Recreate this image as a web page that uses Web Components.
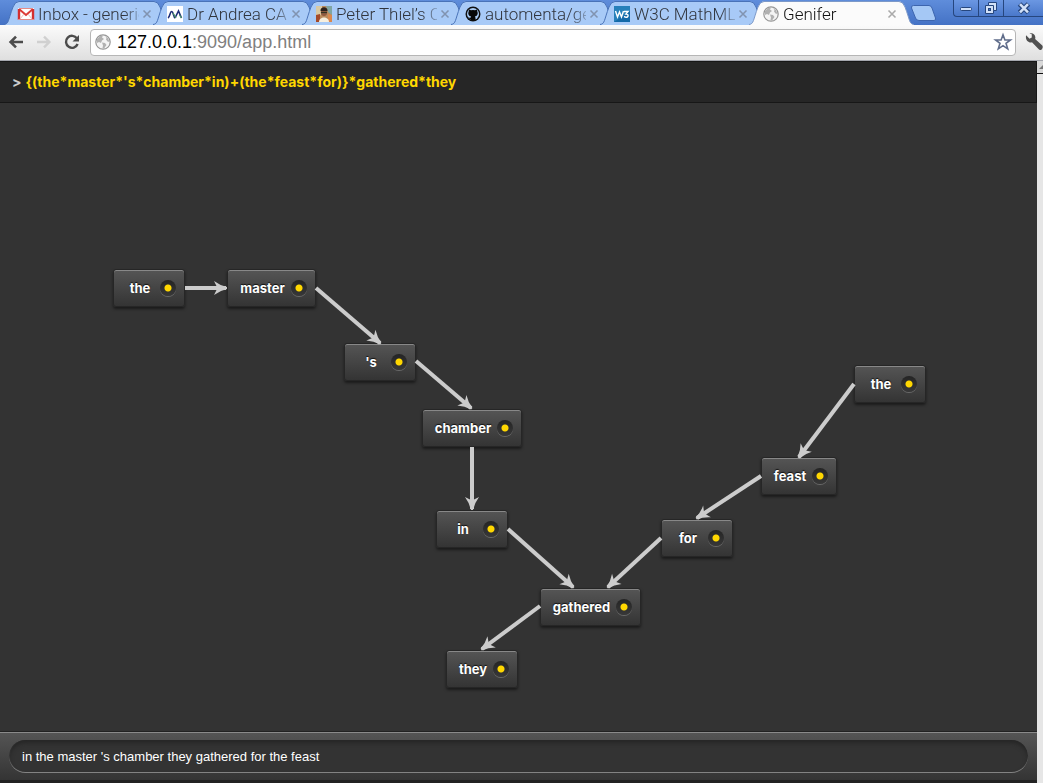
<!DOCTYPE html>
<html lang="en">
<head>
<meta charset="utf-8">
<title>Genifer</title>
<style>
html,body{height:100%;margin:0}
body{display:flex;flex-direction:column;overflow:hidden;background:#333;font-family:"Liberation Sans",Arial,sans-serif}
</style>
</head>
<body>
<browser-tabs>
  <browser-tab><a-icon slot="icon" name="mail"></a-icon>Inbox - generic</browser-tab>
  <browser-tab><a-icon slot="icon" name="wave"></a-icon>Dr Andrea CA</browser-tab>
  <browser-tab><a-icon slot="icon" name="photo"></a-icon>Peter Thiel’s C</browser-tab>
  <browser-tab><a-icon slot="icon" name="github"></a-icon>automenta/ge</browser-tab>
  <browser-tab><a-icon slot="icon" name="w3"></a-icon>W3C MathML</browser-tab>
  <browser-tab selected><a-icon slot="icon" name="globe"></a-icon>Genifer</browser-tab>
</browser-tabs>
<browser-toolbar></browser-toolbar>
<scroll-frame>
  <formula-bar>{(the*master*'s*chamber*in)+(the*feast*for)}*gathered*they</formula-bar>
  <word-graph>
    <word-node x="113" y="166" w="72">the</word-node>
    <word-node x="227" y="166" w="89">master</word-node>
    <word-node x="344" y="240" w="72">'s</word-node>
    <word-node x="422" y="306" w="100">chamber</word-node>
    <word-node x="436" y="407" w="72">in</word-node>
    <word-node x="540" y="485" w="101">gathered</word-node>
    <word-node x="446" y="547" w="72">they</word-node>
    <word-node x="661" y="416" w="72">for</word-node>
    <word-node x="761" y="354" w="76">feast</word-node>
    <word-node x="854" y="262" w="72">the</word-node>
  </word-graph>
  <sentence-bar value="in the master 's chamber they gathered for the feast"></sentence-bar>
</scroll-frame>
<script>
const ICONS = {
  mail:'<rect x="0" y="2" width="16" height="12" rx="1" fill="#fff"/><path d="M1 3L8 9L15 3" fill="none" stroke="#dd3a36" stroke-width="2"/><path d="M1 14V3M15 14V3" stroke="#d32f2f" stroke-width="2.4"/><path d="M2 13L6 8M14 13L10 8" stroke="#eebbb8" fill="none"/><path d="M0 13.5H16M1 2.5H15" stroke="#e58b87"/>',
  wave:'<rect width="16" height="16" fill="#fff"/><path d="M1 12C3 11 3 5.500 4.500 5.500C6.500 5.500 6.500 11 8 12" fill="none" stroke="#1e2e78" stroke-width="1.6"/><path d="M8 12L11.500 5L14.500 12" fill="none" stroke="#1e2e78" stroke-width="1.6"/><path d="M6 7L9 12M12.500 9L14.500 12" stroke="#4c9b64" stroke-width="1.2"/>',
  photo:'<rect width="16" height="16" fill="#b98a5c"/><path d="M0 0H6V7L3 11L0 9Z" fill="#d8c9a4"/><path d="M10 0H16V9L12 6Z" fill="#80a5a2"/><path d="M0 9L4 8V16H0Z" fill="#a44a2a"/><path d="M12 8L16 9V16H12Z" fill="#d9874e"/><ellipse cx="8" cy="6" rx="3.2" ry="4" fill="#8e5a40"/><path d="M4.5 5C4 0 12 0 11.5 5Z" fill="#2c211d"/><path d="M5 6.5H11" stroke="#332" stroke-width="1.2"/><path d="M3 16C3 10 13 10 13 16Z" fill="#f6efdf"/>',
  github:'<circle cx="8" cy="8" r="7.5" fill="#101010"/><circle cx="8" cy="8" r="6" fill="#a9cbf4"/><path d="M4 3.4L6 4.2Q8 3.7 10 4.2L12 3.4L12.3 5.6C13.5 8 12 10.3 9.8 10.6Q10.5 11.2 10.5 12V14.5H5.5V12.9Q3.6 13.2 3 11.2Q4.7 12 5.6 11.8Q5.7 11 6.2 10.6C4 10.3 2.5 8 3.7 5.6Z" fill="#080808"/>',
  w3:'<rect width="16" height="16" fill="#1469a8"/><path d="M0 0H16V5L0 16Z" fill="#2780ba"/><path d="M1.5 5L3.5 11L5.5 6L7.5 11L9.5 5M10 5.5H14L12 8C15 8 14.5 11.5 12 11.3L10 10.5" stroke="#fff" stroke-width="1.4" fill="none"/>',
  globe:'<circle cx="8" cy="8" r="7.2" fill="#f4f4f4" stroke="#969696" stroke-width="1.2"/><path d="M2 5L5 2L8 1.5L7 3.5L9 5L7 6.5L6 9L4 8L2 9ZM10 2L13 4L14.5 8L12.5 7.5L11 5.5L11.5 4ZM7 8.5L10 9L11.5 11L9 14.5L7.5 14L8 11.5Z" fill="#b1b1b1"/>',
  back:'<path d="M2 8H15M8 2.6L2.6 8L8 13.4" fill="none" stroke="#4c4c4c" stroke-width="2.6"/>',
  forward:'<path d="M1 8H14M8 2.6L13.4 8L8 13.4" fill="none" stroke="#d0d0d0" stroke-width="2.4"/>',
  reload:'<path d="M13 4.5A6 6 0 1 0 13.6 10" fill="none" stroke="#4c4c4c" stroke-width="2.4"/><path d="M15 1V7.5H8.5Z" fill="#4c4c4c"/>',
  star:'<path d="M8 .8L9.9 6H15.4L11 9.3L12.7 14.8L8 11.6L3.3 14.8L5 9.3L.6 6H6.1Z" fill="#fff" stroke="#606d8b" stroke-width="1.6"/>',
  wrench:'<path d="M1 2L4 5L6 4V1L4 .5C7-.7 10 2 9 5.3L15.4 11Q16.5 13.2 14.6 14.8Q13 15.5 12 14.3L6.2 8.3C3 9.2 0 6 1 2Z" fill="#505050"/>',
  close:'<path d="M4 4L12 12M12 4L4 12" stroke="currentColor" stroke-width="1.8"/>',
  min:'<rect x="2.5" y="7.5" width="11" height="3" rx="1" fill="#d2e1f8" stroke="#26467e"/>',
  restore:'<path d="M5.5 2.5H13.5V10.5H10.5V13.5H2.5V5.5H5.5Z" fill="#d2e1f8" stroke="#26467e"/><path d="M5.5 5.5H10.5V10.5" fill="none" stroke="#26467e"/><rect x="5.5" y="8.5" width="2" height="2" fill="#4a78c4" stroke="#26467e"/>',
  exit:'<path d="M3.5 4L12.5 12.5M12.5 4L3.5 12.5" stroke="#26467e" stroke-width="5"/><path d="M4 4.2L12 12.3M12 4.2L4 12.3" stroke="#d2e1f8" stroke-width="2.6"/>'
};
const define = (name, html, setup) => customElements.define(name, class extends HTMLElement {
  connectedCallback(){
    if(this.shadowRoot) return;
    this.attachShadow({mode:'open'}).innerHTML = html;
    if(setup) setup.call(this, this.shadowRoot);
  }
});

define('a-icon', `<style>:host{display:block;flex:none;width:16px;height:16px}svg{display:block;width:100%;height:100%;overflow:visible}</style><svg viewBox="0 0 16 16" aria-hidden="true"></svg>`,
  function(r){ r.querySelector('svg').innerHTML = ICONS[this.getAttribute('name')]; });

define('browser-tabs', `<style>
:host{display:flex;height:25px;flex:none;background:linear-gradient(#5f8ddb,#4472c5);overflow:hidden}
.tabs{display:flex;flex:0 1 930px;min-width:0;padding-left:4px}
.new{flex:none;width:28px;height:17px;margin:5px 0 0 -24px;padding:0;border:0;background:none}
.new svg{display:block}
.window{display:flex;flex:none;height:17px;width:90px;margin-left:auto;box-sizing:border-box;border:1px solid #26467e;border-width:0 0 1px 1px;border-radius:0 0 0 4px;background:linear-gradient(#6b97e2,#4a78ca)}
.window button{display:flex;justify-content:center;align-items:center;flex:0 0 25px;padding:0;border:0;border-right:1px solid #26467e;background:none}
.window button:last-child{flex:1;border:0}
</style><div class="tabs"><slot></slot></div>
<button class="new" aria-label="New tab"><svg width="28" height="17" viewBox="0 0 28 17"><path d="M3.5.5H19Q21 .5 22 3L25.500 13Q26 15.500 24 15.500H9Q6.500 15.500 5.500 13L1.500 3Q1 .5 3.500 .5Z" fill="#a5c8f5" stroke="#3d65ae"/></svg></button>
<div class="window"><button aria-label="Minimize"><a-icon name="min"></a-icon></button><button aria-label="Restore"><a-icon name="restore"></a-icon></button><button aria-label="Close window"><a-icon name="exit"></a-icon></button></div>`);

define('browser-tab', `<style>
:host{display:block;position:relative;flex:0 1 165px;min-width:0;margin-right:-16px;height:25px;--fill:#a8caf7;--line:#4a73b8;color:#30343c}
:host([selected]){--fill:#fbfbfb;--line:#7d99c8;z-index:2;color:#111}
.shape{position:absolute;inset:0;width:100%;height:100%}
.shape path{fill:var(--fill);stroke:var(--line);vector-effect:non-scaling-stroke}
.row{position:relative;display:flex;align-items:center;height:25px;padding:2px 14px 0 14px;box-sizing:border-box}
.title{flex:1;min-width:0;margin-left:4px;overflow:hidden;white-space:nowrap;font:300 17px/22px Roboto,"Liberation Sans",sans-serif;-webkit-mask-image:linear-gradient(90deg,#000 85%,rgba(0,0,0,.3));mask-image:linear-gradient(90deg,#000 85%,rgba(0,0,0,.3))}
button{flex:none;width:16px;height:16px;padding:0;border:0;background:none;color:#8193b0}
:host([selected]) button{color:#aaa}
button a-icon{width:14px;height:14px;margin:1px}
</style><svg class="shape" viewBox="0 0 165 25" preserveAspectRatio="none"><path d="M0 24.500C5 24 4 20 9 7Q11 1.500 15 1.500H150Q154 1.500 156 7C161 20 160 24 165 24.500V26H0Z"/></svg>
<div class="row"><slot name="icon"></slot><span class="title"><slot></slot></span><button aria-label="Close tab"><a-icon name="close"></a-icon></button></div>`);

define('browser-toolbar', `<style>
:host{display:flex;align-items:center;flex:none;height:36px;box-sizing:border-box;padding:0 0 1px 8px;background:linear-gradient(#fbfbfb,#dfdfdf);border-bottom:1px solid #a5a7ae;overflow:hidden}
button{flex:none;padding:0;border:0;background:none;margin-right:12px}
.address{flex:1;display:flex;align-items:center;height:27px;box-sizing:border-box;margin:0 9px 0 -2px;padding:0 4px;background:#fff;border:1px solid #b6b6b6;border-radius:4px}
.url{flex:1;margin-left:6px;font-size:18px;line-height:24px;color:#808080}
.url b{font-weight:400;color:#000}
.address button{margin:0}
.menu{margin:0}
.menu a-icon{width:18px;height:18px}
</style>
<button aria-label="Back"><a-icon name="back"></a-icon></button><button aria-label="Forward"><a-icon name="forward"></a-icon></button><button aria-label="Reload"><a-icon name="reload"></a-icon></button>
<div class="address"><a-icon name="globe"></a-icon><span class="url"><b>127.0.0.1</b>:9090/app.html</span><button aria-label="Bookmark"><a-icon name="star"></a-icon></button></div>
<button class="menu" aria-label="Settings"><a-icon name="wrench"></a-icon></button>`);

define('scroll-frame', `<style>
:host{display:flex;flex:1;min-height:0}
main{display:flex;flex-direction:column;flex:1;min-width:0;background:#333;box-sizing:border-box}
.bar{flex:none;width:6px;background:#e6e6e6}
.up{height:12px;border-bottom:1px solid #111;overflow:hidden;background:#d8d8d8}
.up svg{display:block}
</style><main><slot></slot></main><div class="bar"><div class="up"><svg width="6" height="12"><path d="M2 8L6 4V8Z" fill="#777"/></svg></div></div>`);

define('formula-bar', `<style>
:host{display:flex;align-items:center;flex:none;height:42px;box-sizing:border-box;padding:0 12px;background:#262626;border:1px solid #171717;border-width:1px 1px 1px 0;color:#ffd700;font:700 14px/16px Inter,"Liberation Sans",sans-serif;white-space:nowrap}
span{color:#ccc;margin-right:4px}
</style><span>&gt;</span><slot></slot>`);

define('word-node', `<style>
:host{position:absolute;display:flex;align-items:center;height:38px;box-sizing:border-box;padding:0 8px 0 11px;border:1px solid #262626;border-radius:3px;background:linear-gradient(#555,#343434);box-shadow:inset 0 1px #888,0 2px 3px rgba(0,0,0,.5);color:#fff;font:700 13px/16px Inter,"Liberation Sans",sans-serif;text-shadow:0 -1px 1px #111}
.label{flex:1;text-align:center;white-space:nowrap;margin-right:5px}
.port{flex:none;width:16px;height:16px;border-radius:50%;background:radial-gradient(circle,#ffd700 3px,transparent 4px),linear-gradient(#242424,#383838);box-shadow:0 1px #6a6a6a}
</style><span class="label"><slot></slot></span><span class="port"></span>`,
  function(){ for(const [k,p] of [['x','left'],['y','top'],['w','width']]) this.style[p] = this.getAttribute(k)+'px'; });

const WIRES = [[185,185,226,185],[316,185,380,240],[416,258,471,305],[472,344,472,406],[508,426,573,484],[661,435,608,484],[540,503,482,546],[761,373,697,415],[854,281,799,354]];
define('word-graph', `<style>
:host{display:block;position:relative;flex:1;min-height:0;overflow:hidden;background:#333}
svg{position:absolute;inset:0;width:100%;height:100%}
</style><slot></slot><svg aria-hidden="true"><defs><marker id="head" markerUnits="userSpaceOnUse" markerWidth="16" markerHeight="16" refX="13" refY="8" orient="auto" viewBox="0 0 16 16"><path d="M1 1Q7 5.500 14 7V9Q7 10.500 1 15L4.500 8Z" fill="#ccc"/></marker></defs>
${WIRES.map(([a,b,c,d])=>`<path d="M${a} ${b}L${c} ${d}" stroke="#ccc" stroke-width="4" marker-end="url(#head)"/>`).join('')}</svg>`);

define('sentence-bar', `<style>
:host{display:block;flex:none;height:52px;box-sizing:border-box;padding:8px 9px 9px;background:linear-gradient(#555,#343434);border:1px solid #222;border-width:1px 0 3px;box-shadow:inset 0 1px #8a8a8a}
input{display:block;width:100%;height:33px;box-sizing:border-box;margin:0;padding:0 13px;border:0;border-radius:17px;outline:0;background:#333;box-shadow:inset 0 3px 4px #262626,inset 0 -1px #888,inset 1px 0 #444;color:#fff;font:13px/16px "Liberation Sans",Arial,sans-serif}
</style><input type="text" aria-label="Sentence">`,
  function(r){ r.querySelector('input').value = this.getAttribute('value'); });
</script>
</body>
</html>
